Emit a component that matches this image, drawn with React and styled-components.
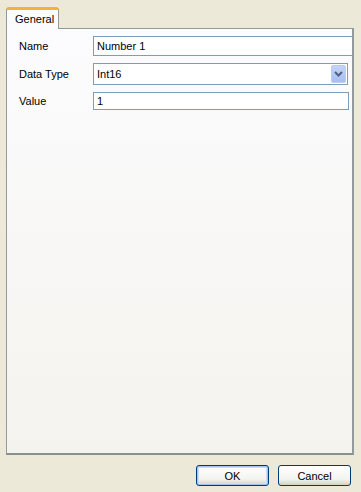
import React from 'react'
import styled, { createGlobalStyle } from 'styled-components'

const Global = createGlobalStyle`
  html, body {
    margin: 0;
    padding: 0;
    background: #ece9d8;
  }
  #root {
    height: 492px;
  }
  * { box-sizing: border-box; }
`

function ArrowIcon() {
  return (
    <svg width="9" height="6" viewBox="0 0 9 6">
      <path d="M1 1 L4.5 4.5 L8 1" fill="none" stroke="#4d6185" strokeWidth="2" />
    </svg>
  )
}

export default function App() {
  return (
    <>
      <Global />
      <Dialog>
        <TabStrip>
          <Tab>General</Tab>
        </TabStrip>
        <Panel>
          <Form>
            <Label>Name</Label>
            <TextBox open>Number 1</TextBox>
            <Label>Data Type</Label>
            <Combo>
              <span>Int16</span>
              <DropButton><ArrowIcon /></DropButton>
            </Combo>
            <Label>Value</Label>
            <TextBox short>1</TextBox>
          </Form>
        </Panel>
        <Footer>
          <Button focused>OK</Button>
          <Button>Cancel</Button>
        </Footer>
      </Dialog>
    </>
  )
}

const Dialog = styled.div`
  height: 492px;
  display: flex;
  flex-direction: column;
  padding: 7px 7px 6px 6px;
  font-family: "Liberation Sans", Arial, sans-serif;
  font-size: 11px;
  color: #000;
`

const TabStrip = styled.div`
  display: flex;
  height: 21px;
  position: relative;
  z-index: 1;
`

const Tab = styled.div`
  width: 53px;
  height: 22px;
  background: #fcfcfe;
  border: 1px solid #919b9c;
  border-top: 3px solid #f7b139;
  border-bottom: none;
  border-radius: 3px 3px 0 0;
  padding: 3px 0 0 8px;
`

const Panel = styled.div`
  flex: 1;
  border: 1px solid #919b9c;
  border-right: 2px solid #919b9c;
  border-bottom: 2px solid #8a9090;
  background: linear-gradient(#fcfcfe, #f4f3ee);
  padding: 7px 0 0 12px;
  width: 348px;
`

const Form = styled.div`
  display: grid;
  grid-template-columns: 74px 1fr;
  row-gap: 7px;
  align-items: center;
`

const Label = styled.div`
  line-height: 14px;
`

const TextBox = styled.div`
  height: ${p => (p.short ? '18px' : '20px')};
  background: #fff;
  border: 1px solid #7f9db9;
  border-right: ${p => (p.open ? 'none' : '1px solid #7f9db9')};
  margin-right: ${p => (p.open ? '0' : '3px')};
  padding: 0 3px;
  display: flex;
  align-items: center;
`

const Combo = styled.div`
  height: 22px;
  background: #fff;
  border: 1px solid #7f9db9;
  margin-right: 4px;
  padding: 0 1px 0 3px;
  display: flex;
  align-items: center;
  justify-content: space-between;
`

const DropButton = styled.div`
  width: 15px;
  height: 18px;
  border-radius: 2px;
  background: linear-gradient(#c6d3f7, #b2c6f5 60%, #a9bdf0);
  border: 1px solid #bccbef;
  display: flex;
  align-items: center;
  justify-content: center;
`

const Footer = styled.div`
  display: flex;
  justify-content: flex-end;
  gap: 9px;
  padding: 10px 3px 0 0;
  height: 31px;
`

const Button = styled.div`
  width: 73px;
  height: 21px;
  border: 1px solid #003c74;
  border-radius: 3px;
  background: linear-gradient(#ffffff, #f3f3ef 70%, #d6d0c5);
  box-shadow: ${p => (p.focused ? 'inset 0 0 0 1px #a7c2f0, inset 0 0 0 2px #cedcf7' : 'none')};
  display: flex;
  align-items: center;
  justify-content: center;
`
